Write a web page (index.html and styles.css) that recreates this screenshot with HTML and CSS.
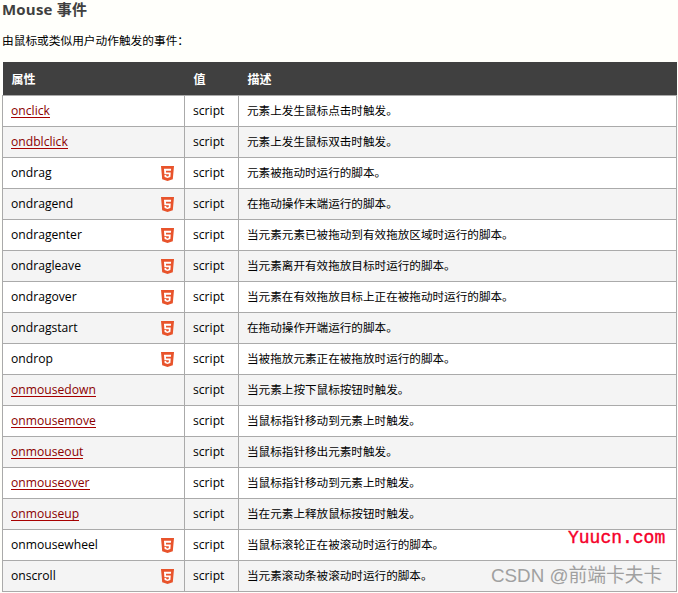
FILE: index.html
```html
<!DOCTYPE html>
<html lang="zh">
<head>
<meta charset="utf-8">
<title>Mouse 事件</title>
<link rel="stylesheet" href="styles.css">
</head>
<body>
<svg class="sprite" width="0" height="0" aria-hidden="true"><defs><symbol id="h5" viewBox="0 0 14 16"><path fill="#e8532b" d="M0 0h14l-1.300 14.200L7 16l-5.700-1.800z"/><path fill="#fff" d="M3.200 3h7.700l-.2 2H5.300l.15 2h5.050l-.4 4.900L7 12.800l-3.100-.9-.2-2.300h1.900l.1 1.100 1.300.4 1.300-.4.15-1.800H3.650z"/></symbol></defs></svg>
<h2 class="title">Mouse 事件</h2>
<p class="intro">由鼠标或类似用户动作触发的事件：</p>
<table class="events">
<thead><tr><th class="c-name">属性</th><th class="c-val">值</th><th>描述</th></tr></thead>
<tbody>
<tr><td><a href="#">onclick</a></td><td>script</td><td class="desc">元素上发生鼠标点击时触发。</td></tr>
<tr><td><a href="#">ondblclick</a></td><td>script</td><td class="desc">元素上发生鼠标双击时触发。</td></tr>
<tr><td>ondrag<svg class="icon"><use href="#h5"/></svg></td><td>script</td><td class="desc">元素被拖动时运行的脚本。</td></tr>
<tr><td>ondragend<svg class="icon"><use href="#h5"/></svg></td><td>script</td><td class="desc">在拖动操作末端运行的脚本。</td></tr>
<tr><td>ondragenter<svg class="icon"><use href="#h5"/></svg></td><td>script</td><td class="desc">当元素元素已被拖动到有效拖放区域时运行的脚本。</td></tr>
<tr><td>ondragleave<svg class="icon"><use href="#h5"/></svg></td><td>script</td><td class="desc">当元素离开有效拖放目标时运行的脚本。</td></tr>
<tr><td>ondragover<svg class="icon"><use href="#h5"/></svg></td><td>script</td><td class="desc">当元素在有效拖放目标上正在被拖动时运行的脚本。</td></tr>
<tr><td>ondragstart<svg class="icon"><use href="#h5"/></svg></td><td>script</td><td class="desc">在拖动操作开端运行的脚本。</td></tr>
<tr><td>ondrop<svg class="icon"><use href="#h5"/></svg></td><td>script</td><td class="desc">当被拖放元素正在被拖放时运行的脚本。</td></tr>
<tr><td><a href="#">onmousedown</a></td><td>script</td><td class="desc">当元素上按下鼠标按钮时触发。</td></tr>
<tr><td><a href="#">onmousemove</a></td><td>script</td><td class="desc">当鼠标指针移动到元素上时触发。</td></tr>
<tr><td><a href="#">onmouseout</a></td><td>script</td><td class="desc">当鼠标指针移出元素时触发。</td></tr>
<tr><td><a href="#">onmouseover</a></td><td>script</td><td class="desc">当鼠标指针移动到元素上时触发。</td></tr>
<tr><td><a href="#">onmouseup</a></td><td>script</td><td class="desc">当在元素上释放鼠标按钮时触发。</td></tr>
<tr><td>onmousewheel<svg class="icon"><use href="#h5"/></svg></td><td>script</td><td class="desc">当鼠标滚轮正在被滚动时运行的脚本。</td></tr>
<tr><td>onscroll<svg class="icon"><use href="#h5"/></svg></td><td>script</td><td class="desc">当元素滚动条被滚动时运行的脚本。</td></tr>
</tbody>
</table>
<span class="mark-site">Yuucn.com</span>
<span class="mark-csdn">CSDN @前端卡夫卡</span>
</body>
</html>
```
FILE: styles.css
```css
html, body { margin: 0; padding: 0; }
body {
  position: relative;
  height: 593px;
  overflow: hidden;
  background: #fffffb;
  color: #000;
  font-family: "Open Sans", "Noto Sans CJK SC", sans-serif;
  font-size: 12px;
}
.sprite { position: absolute; }
.title {
  margin: 0;
  padding: 0 0 0 2px;
  font-size: 15px;
  line-height: 18px;
  font-weight: 700;
  letter-spacing: 0.2px;
  color: #404040;
}
.intro {
  margin: 14px 0 0;
  padding-left: 2px;
  line-height: 17px;
  font-size: 11.700px;
}
.events {
  margin: 13px 0 0 2px;
  width: 675px;
  border-collapse: collapse;
  table-layout: fixed;
  background: #fff;
}
.c-name { width: 182px; }
.c-val { width: 54px; }
.events th {
  height: 33px;
  padding: 1px 0 0 9px;
  background: #404040;
  color: #fff;
  font-size: 12px;
  font-weight: 700;
  text-align: left;
  box-sizing: border-box;
}
.events td {
  position: relative;
  height: 31px;
  padding: 0 0 0 8px;
  border: 1px solid #aaa;
  box-sizing: border-box;
  font-size: 12.150px;
  white-space: nowrap;
}
.events td.desc {
  padding-bottom: 2px;
  font-size: 11.600px;
}
.events tbody tr:nth-child(even) td { background: #f4f4f4; }
.events td a {
  display: inline-block;
  line-height: 13px;
  color: #8b0000;
  text-decoration: none;
  border-bottom: 1px solid #a80000;
}
.icon {
  position: absolute;
  right: 10px;
  top: 8px;
  width: 13px;
  height: 15px;
}
.mark-site {
  position: absolute;
  left: 568px;
  top: 528px;
  font-family: "Liberation Mono", monospace;
  font-size: 18px;
  -webkit-text-stroke: 0.4px #f5002a;
  color: #f5002a;
}
.mark-csdn {
  position: absolute;
  left: 491px;
  top: 560px;
  font-family: "Liberation Sans", "Noto Sans CJK SC", sans-serif;
  font-size: 18.800px;
  color: #a0a0a0;
}
```
